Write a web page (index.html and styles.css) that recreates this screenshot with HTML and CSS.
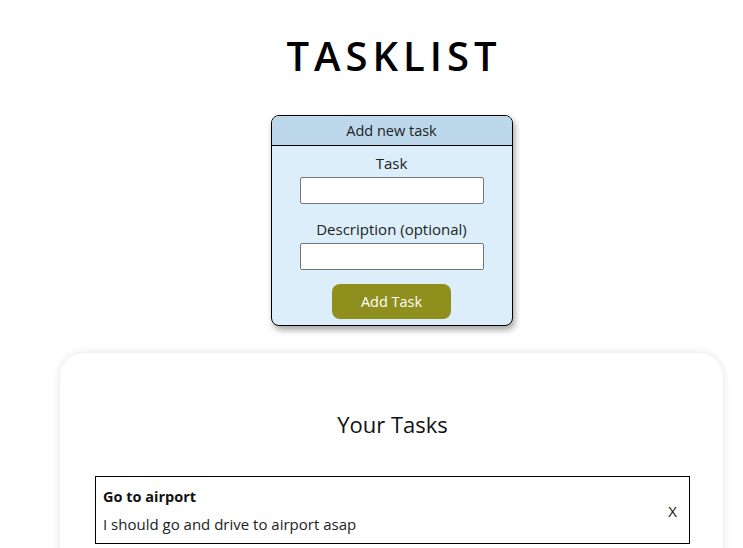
FILE: index.html
```html
<!DOCTYPE html>
<html>
<head>
<meta charset="utf-8">
<link rel="stylesheet" href="styles.css">
</head>
<body>
<div class="page">
  <h1 class="title">TASKLIST</h1>
  <form class="add-card">
    <div class="add-head">Add new task</div>
    <div class="add-body">
      <label class="field-label">Task</label>
      <input class="field" type="text">
      <label class="field-label second">Description (optional)</label>
      <input class="field" type="text">
      <button type="button" class="add-btn">Add Task</button>
    </div>
  </form>
  <section class="tasks">
    <h2 class="tasks-title">Your Tasks</h2>
    <div class="task">
      <div class="task-text">
        <div class="task-name">Go to airport</div>
        <div class="task-desc">I should go and drive to airport asap</div>
      </div>
      <span class="task-del">X</span>
    </div>
  </section>
</div>
</body>
</html>
```
FILE: styles.css
```css
html, body {
  margin: 0;
  padding: 0;
  background: #fff;
  overflow: hidden;
}
body {
  font-family: "Open Sans", "Noto Sans", sans-serif;
  color: #111;
}
.page {
  padding-left: 40px;
  display: flex;
  flex-direction: column;
  align-items: center;
}
.title {
  margin: 30px 0 0;
  font-family: "Open Sans", sans-serif;
  font-weight: 600;
  font-size: 40px;
  letter-spacing: 5px;
  line-height: 52px;
  padding-left: 5px;
  color: #000;
}
.add-card {
  margin-top: 33px;
  width: 240px;
  border: 1px solid #000;
  border-radius: 8px;
  overflow: hidden;
  background: #dbeefa;
  box-shadow: 2px 4px 6px rgba(0,0,0,0.35);
}
.add-head {
  background: #bcd8ea;
  border-bottom: 1px solid #000;
  height: 29px;
  line-height: 29px;
  text-align: center;
  font-size: 14.5px;
  color: #222;
}
.add-body {
  display: flex;
  flex-direction: column;
  align-items: center;
  padding: 6px 0 6px;
}
.field-label {
  font-size: 15px;
  line-height: 22px;
  color: #222;
}
.field-label.second {
  margin-top: 14px;
}
.field {
  box-sizing: border-box;
  width: 184px;
  height: 27px;
  margin: 3px 0 0;
  border: 1px solid #767676;
  border-radius: 2px;
  background: #fff;
}
.add-btn {
  margin-top: 14px;
  width: 119px;
  height: 35px;
  border: none;
  border-radius: 8px;
  background: #8e8f1c;
  color: #fff;
  font-family: "Open Sans", sans-serif;
  font-size: 14.5px;
}
.tasks {
  box-sizing: border-box;
  margin-top: 27px;
  width: 663px;
  min-height: 300px;
  background: #fff;
  border-radius: 24px;
  box-shadow: 0 0 8px rgba(0,0,0,0.12);
  padding: 55px 33px 0 35px;
}
.tasks-title {
  margin: 0;
  text-align: center;
  font-weight: 400;
  font-size: 22px;
  line-height: 32px;
  color: #111;
}
.task {
  margin-top: 36px;
  border: 1px solid #000;
  display: flex;
  align-items: center;
  padding: 10px 12px 9px 7px;
}
.task-text {
  flex: 1;
}
.task-name {
  font-weight: 700;
  font-size: 14.5px;
  line-height: 20px;
}
.task-desc {
  margin-top: 7px;
  font-size: 15px;
  line-height: 20px;
  color: #222;
}
.task-del {
  font-size: 15px;
  color: #111;
}
```
